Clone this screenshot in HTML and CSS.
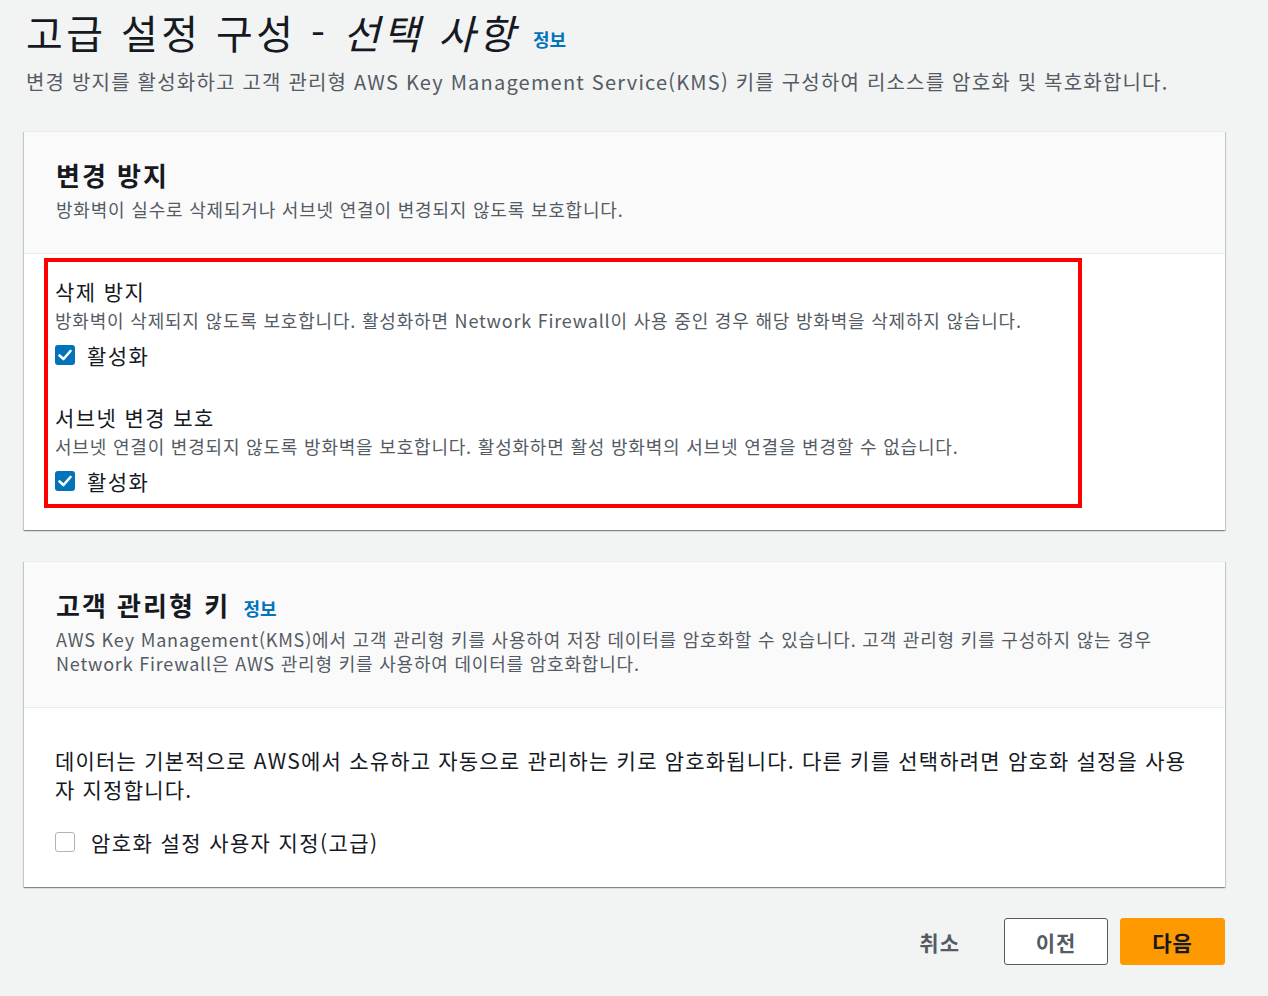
FILE: index.html
```html
<!DOCTYPE html>
<html lang="ko">
<head>
    <meta charset="UTF-8">
    <meta name="viewport" content="width=device-width, initial-scale=1.0">
    <title>고급 설정 구성</title>
    <link rel="stylesheet" href="styles.css">
</head>
<body>
    <div class="page">
        <h1 class="title">고급 설정 구성 - <em>선택 사항</em> <a class="info big" href="#">정보</a></h1>
        <p class="subtitle">변경 방지를 활성화하고 고객 관리형 AWS Key Management Service(KMS) 키를 구성하여 리소스를 암호화 및 복호화합니다.</p>

        <div class="card">
            <div class="card-head">
                <h2>변경 방지</h2>
                <p class="desc">방화벽이 실수로 삭제되거나 서브넷 연결이 변경되지 않도록 보호합니다.</p>
            </div>
            <div class="card-body first">
                <div class="highlight">
                    <div class="field">
                        <div class="label">삭제 방지</div>
                        <div class="hint">방화벽이 삭제되지 않도록 보호합니다. 활성화하면 Network Firewall이 사용 중인 경우 해당 방화벽을 삭제하지 않습니다.</div>
                        <label class="check">
                            <span class="box on"><svg viewBox="0 0 20 20" width="20" height="20"><path d="M4.5 10.5 L8.5 14 L15.5 6" fill="none" stroke="#fff" stroke-width="2.6" stroke-linecap="round" stroke-linejoin="round"/></svg></span>
                            활성화
                        </label>
                    </div>
                    <div class="field second">
                        <div class="label">서브넷 변경 보호</div>
                        <div class="hint">서브넷 연결이 변경되지 않도록 방화벽을 보호합니다. 활성화하면 활성 방화벽의 서브넷 연결을 변경할 수 없습니다.</div>
                        <label class="check">
                            <span class="box on"><svg viewBox="0 0 20 20" width="20" height="20"><path d="M4.5 10.5 L8.5 14 L15.5 6" fill="none" stroke="#fff" stroke-width="2.6" stroke-linecap="round" stroke-linejoin="round"/></svg></span>
                            활성화
                        </label>
                    </div>
                </div>
            </div>
        </div>

        <div class="card">
            <div class="card-head">
                <h2>고객 관리형 키 <a class="info" href="#">정보</a></h2>
                <p class="desc">AWS Key Management(KMS)에서 고객 관리형 키를 사용하여 저장 데이터를 암호화할 수 있습니다. 고객 관리형 키를 구성하지 않는 경우<br>Network Firewall은 AWS 관리형 키를 사용하여 데이터를 암호화합니다.</p>
            </div>
            <div class="card-body last">
                <p class="text">데이터는 기본적으로 AWS에서 소유하고 자동으로 관리하는 키로 암호화됩니다. 다른 키를 선택하려면 암호화 설정을 사용<br>자 지정합니다.</p>
                <label class="check wide">
                    <span class="box"></span>
                    암호화 설정 사용자 지정(고급)
                </label>
            </div>
        </div>

        <div class="actions">
            <button class="link">취소</button>
            <button class="normal">이전</button>
            <button class="primary">다음</button>
        </div>
    </div>
</body>
</html>
```

FILE: styles.css
```css
body {
    margin: 0;
    background-color: #f2f3f3;
    font-family: "Noto Sans CJK KR", "Noto Sans", sans-serif;
    color: #16191f;
}
.page {
    width: 1201px;
    padding: 8px 0 0 24px;
}
.title {
    margin: 0 0 0 2px;
    font-size: 40px;
    line-height: 48px;
    font-weight: 400;
    letter-spacing: 3.4px;
}
.title em {
    font-style: italic;
}
.info {
    color: #0073bb;
    font-size: 16px;
    font-weight: 700;
    letter-spacing: 0;
    text-decoration: none;
}
.info.big {
    font-size: 18px;
    position: relative;
    top: -2px;
}
.subtitle {
    margin: 3px 0 0 2px;
    font-size: 20px;
    line-height: 28px;
    color: #545b64;
    letter-spacing: 1.2px;
}
.card {
    margin-top: 35px;
    background: #fff;
    box-shadow: 0 1px 1px 0 rgba(0, 28, 36, 0.3), 1px 1px 1px 0 rgba(0, 28, 36, 0.15), -1px 1px 1px 0 rgba(0, 28, 36, 0.15);
    border-top: 1px solid #eaeded;
}
.card + .card {
    margin-top: 31px;
}
.card-head {
    background: #fafafa;
    padding: 26px 32px 32px 32px;
    border-bottom: 1px solid #eaeded;
}
.card-head h2 {
    margin: 0;
    font-size: 26px;
    line-height: 34px;
    font-weight: 700;
    letter-spacing: 2px;
}
.card-head h2 .info {
    margin-left: 4px;
    font-size: 18px;
    line-height: 1;
}
.desc {
    margin: 5px 0 0;
    font-size: 18px;
    line-height: 24px;
    color: #545b64;
    letter-spacing: 0.8px;
}
.card-body.first {
    padding: 4px 143px 22px 20px;
}
.highlight {
    border: 4px solid #ff0000;
    padding: 14px 7px 9px 7px;
}
.field.second {
    margin-top: 33px;
}
.label {
    font-size: 21px;
    line-height: 30px;
    letter-spacing: 1.4px;
}
.hint {
    margin-top: 2px;
    font-size: 18px;
    line-height: 24px;
    color: #545b64;
    letter-spacing: 0.8px;
}
.check {
    display: flex;
    align-items: center;
    gap: 12px;
    margin-top: 9px;
    font-size: 21px;
    line-height: 28px;
    letter-spacing: 1.4px;
}
.check.wide {
    gap: 16px;
    margin-top: 24px;
}
.box {
    width: 20px;
    height: 20px;
    box-sizing: border-box;
    border: 1px solid #aab7b8;
    border-radius: 3px;
    background: #fff;
}
.box.on {
    border: none;
    background: #0073bb;
}
.box svg {
    display: block;
}
.card-body.last {
    padding: 38px 32px 31px 31px;
}
.text {
    margin: 0;
    font-size: 21px;
    line-height: 29px;
    letter-spacing: 1.2px;
}
.actions {
    display: flex;
    justify-content: flex-end;
    gap: 12px;
    margin-top: 31px;
}
.actions button {
    height: 47px;
    padding: 0;
    font-family: inherit;
    font-size: 21px;
    font-weight: 700;
    letter-spacing: 1px;
    border-radius: 3px;
    cursor: pointer;
}
.link {
    background: none;
    border: none;
    color: #545b64;
    padding: 0 20px !important;
    margin-right: 12px;
}
.normal {
    width: 104px;
    background: #fff;
    border: 1px solid #545b64;
    color: #545b64;
}
.primary {
    width: 105px;
    background: #ff9900;
    border: 1px solid #ff9900;
    color: #16191f;
}
```
